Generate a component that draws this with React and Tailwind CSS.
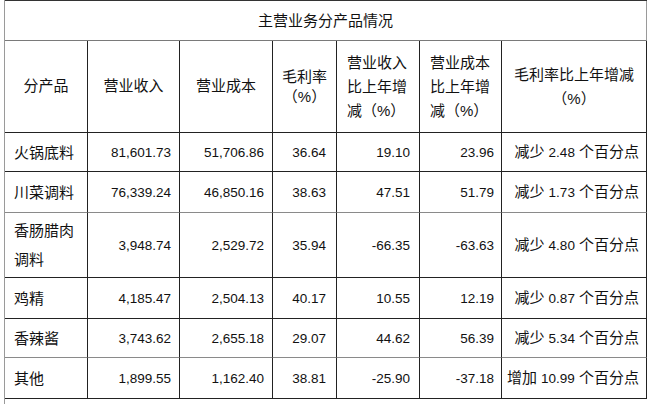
const rows = [
  { name: '火锅底料', h: 'h-[39px]', line: 'border-[#222]', v: ['81,601.73', '51,706.86', '36.64', '19.10', '23.96'], verb: '减少', pt: '2.48' },
  { name: '川菜调料', h: 'h-[41px]', line: 'border-[#8a8a8a]', v: ['76,339.24', '46,850.16', '38.63', '47.51', '51.79'], verb: '减少', pt: '1.73' },
  { name: '香肠腊肉', name2: '调料', h: 'h-[65px]', line: 'border-[#222]', v: ['3,948.74', '2,529.72', '35.94', '-66.35', '-63.63'], verb: '减少', pt: '4.80' },
  { name: '鸡精', h: 'h-[41px]', line: 'border-[#222]', v: ['4,185.47', '2,504.13', '40.17', '10.55', '12.19'], verb: '减少', pt: '0.87' },
  { name: '香辣酱', h: 'h-[39px]', line: 'border-[#8a8a8a]', v: ['3,743.62', '2,655.18', '29.07', '44.62', '56.39'], verb: '减少', pt: '5.34' },
  { name: '其他', h: 'h-[41px]', line: 'border-[#222]', v: ['1,899.55', '1,162.40', '38.81', '-25.90', '-37.18'], verb: '增加', pt: '10.99' },
];

const Num = ({ children }) => <span className="text-[13.5px]">{children}</span>;

export default function App() {
  return (
    <div className="w-[654px] h-[404px] bg-white text-[#111] text-[15px] font-['Liberation_Sans','Noto_Sans_CJK_SC',sans-serif]">
      <div className="ml-[4px] h-full border-l border-[#9a9a9a]">
        <table className="table-fixed border-separate border-spacing-0 w-[642px] border-t border-[#333]">
          <colgroup>
            <col className="w-[83px]" />
            <col className="w-[92px]" />
            <col className="w-[93px]" />
            <col className="w-[64px]" />
            <col className="w-[83px]" />
            <col className="w-[82px]" />
            <col className="w-[145px]" />
          </colgroup>
          <tbody>
            <tr className="h-[40px]">
              <td colSpan={7} className="text-center border-b border-r border-b-[#7a7a7a] border-r-[#9a9a9a] leading-none">
                主营业务分产品情况
              </td>
            </tr>
            <tr className="h-[92px]">
              <td className="text-center border-r border-b border-[#222]">分产品</td>
              <td className="text-center border-r border-b border-[#222]">营业收入</td>
              <td className="text-center border-r border-b border-[#222]">营业成本</td>
              <td className="text-center border-r border-b border-[#222] leading-[20px]">
                毛利率<br />（%）
              </td>
              <td className="pl-[10px] border-r border-b border-[#222] leading-[24px]">
                营业收入<br />比上年增<br />减（%）
              </td>
              <td className="pl-[10px] border-r border-b border-[#222] leading-[24px]">
                营业成本<br />比上年增<br />减（%）
              </td>
              <td className="text-center border-r border-b border-[#222] leading-[24px]">
                毛利率比上年增减<br />（%）
              </td>
            </tr>
            {rows.map((r) => (
              <tr key={r.name} className={r.h}>
                <td className={`pl-[9px] border-r border-r-[#222] border-b ${r.line} leading-[29px]`}>
                  {r.name}
                  {r.name2 && (
                    <>
                      <br />
                      {r.name2}
                    </>
                  )}
                </td>
                <td className={`text-right pr-[8px] border-r border-r-[#222] border-b ${r.line}`}><Num>{r.v[0]}</Num></td>
                <td className={`text-right pr-[8px] border-r border-r-[#222] border-b ${r.line}`}><Num>{r.v[1]}</Num></td>
                <td className={`text-right pr-[10px] border-r border-r-[#222] border-b ${r.line}`}><Num>{r.v[2]}</Num></td>
                <td className={`text-right pr-[9px] border-r border-r-[#222] border-b ${r.line}`}><Num>{r.v[3]}</Num></td>
                <td className={`text-right pr-[7px] border-r border-r-[#222] border-b ${r.line}`}><Num>{r.v[4]}</Num></td>
                <td className={`text-right pr-[7px] whitespace-nowrap border-r border-r-[#222] border-b ${r.line}`}>
                  {r.verb} <Num>{r.pt}</Num> 个百分点
                </td>
              </tr>
            ))}
          </tbody>
        </table>
      </div>
    </div>
  );
}
